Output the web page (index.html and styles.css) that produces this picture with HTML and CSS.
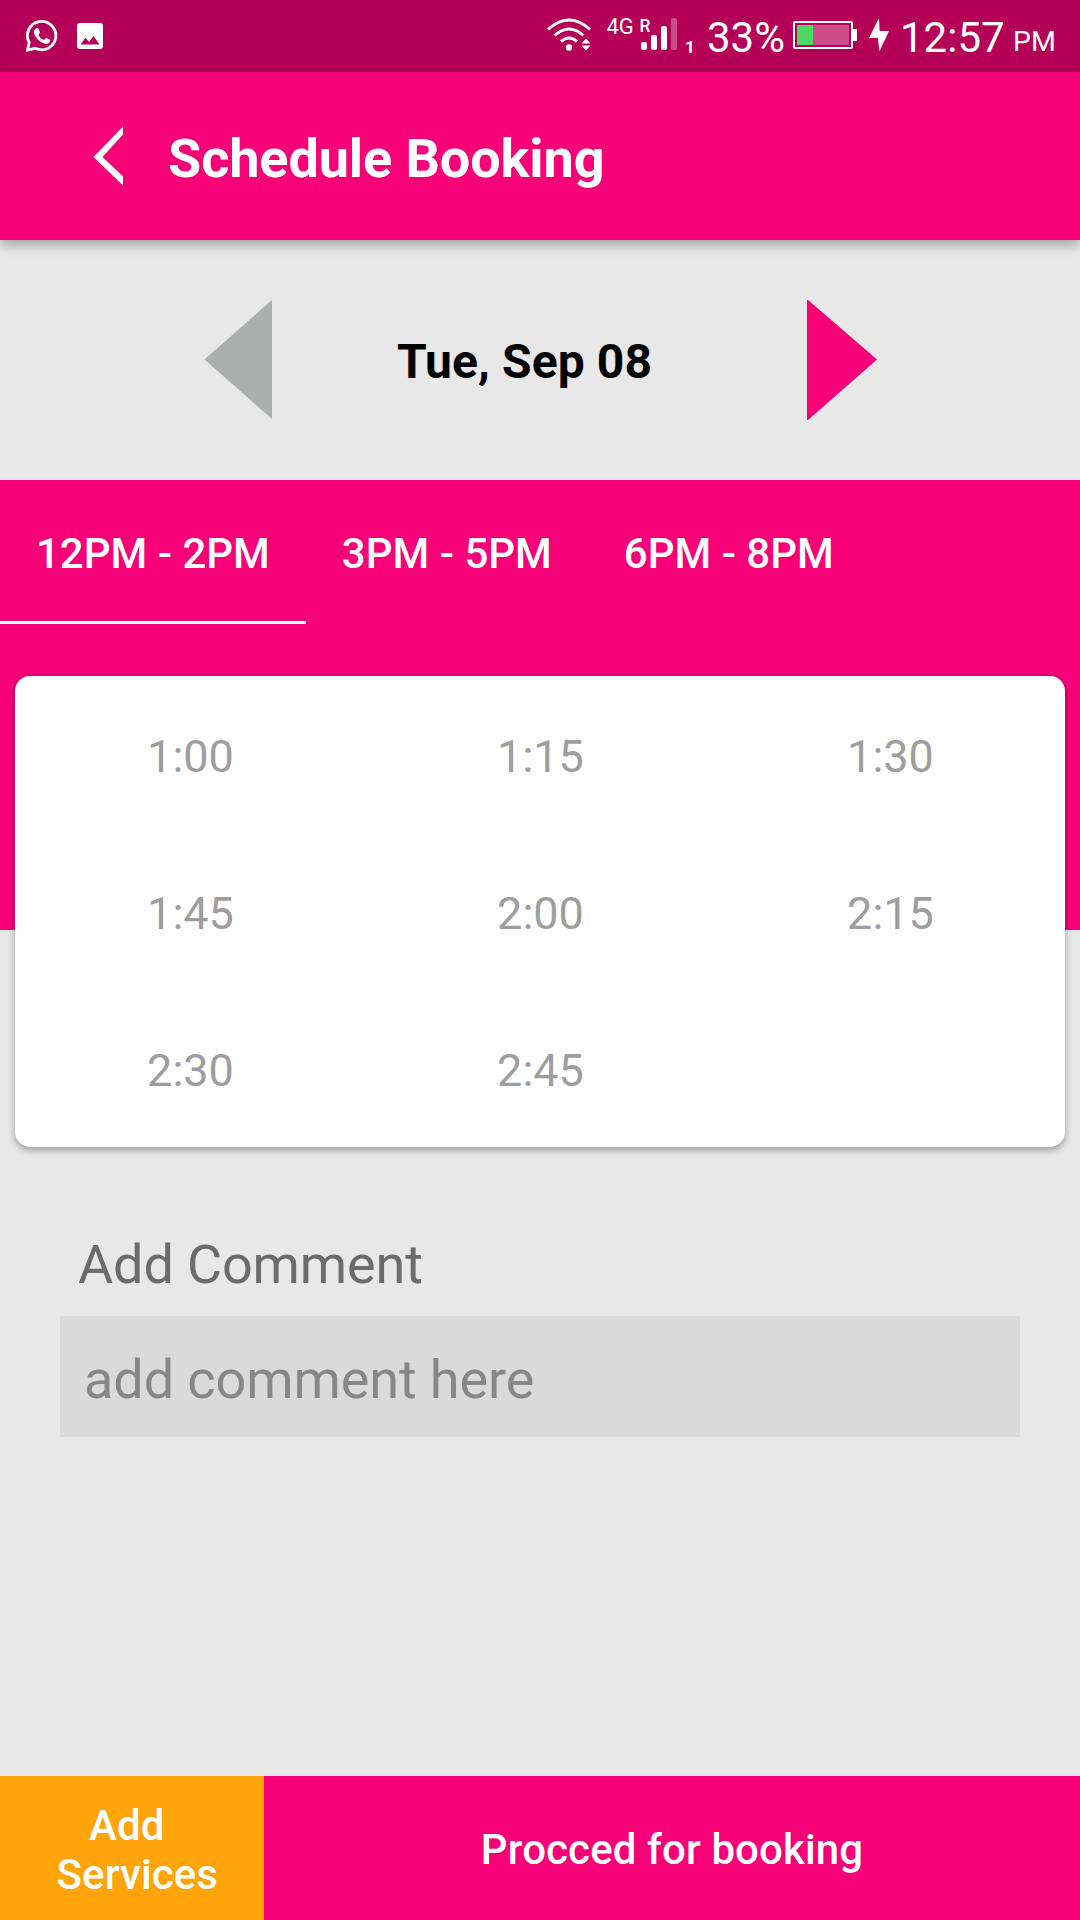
FILE: index.html
```
<!DOCTYPE html>
<html lang="en">
<head>
    <meta charset="UTF-8">
    <meta name="viewport" content="width=device-width, initial-scale=1.0">
    <title>Schedule Booking</title>
    <link rel="stylesheet" href="styles.css">
</head>
<body>
    <!-- Status bar -->
    <div class="status-bar">
        <svg class="icon-whatsapp" width="34" height="34" viewBox="0 0 34 34">
            <path d="M4.2 23.5 A14.2 14.2 0 1 1 10.2 29.3 L2.6 31.2 Z" fill="none" stroke="#fff" stroke-width="2.8"/>
            <path d="M11.2 9.2 C12.5 8.6 13.3 9 13.8 10.2 L14.9 13 C15.2 14 14.2 14.8 13.4 15.8 C14.6 18.2 16.5 20 19 21 C20 20.2 20.6 18.8 21.6 19.1 L24.6 20.6 C25.6 21.1 25.3 22.4 24.6 23.3 C23.3 24.8 21.3 25.2 19.5 24.6 C14.5 23 11 19.5 9.2 15 C8.4 12.8 9.2 10.2 11.2 9.2 Z" fill="#fff"/>
        </svg>
        <svg class="icon-picture" width="26" height="26" viewBox="0 0 26 26">
            <rect width="26" height="26" rx="3" fill="#fff"/>
            <path d="M3.5 21.5 L8.5 14.8 L12 19 L16.5 13 L22.5 21.5 Z" fill="#b50058"/>
        </svg>
        <div class="status-right">
            <svg class="icon-wifi" width="44" height="34" viewBox="0 0 44 34">
                <g fill="none" stroke="#fff" stroke-width="3">
                    <path d="M1 11.5 Q22 -7.5 43 11.5"/>
                    <path d="M7.5 17.5 Q22 4.5 36.5 17.5"/>
                    <path d="M14 23.5 Q22 16.5 30 23.5"/>
                </g>
                <circle cx="22" cy="29.5" r="3.2" fill="#fff"/>
                <path d="M34.5 25.5 L39 20.5 L43.5 25.5 Z M34.5 27.5 L39 32.5 L43.5 27.5 Z" fill="#fff"/>
            </svg>
            <svg class="icon-signal" width="100" height="50" viewBox="-5 -5 100 50">
                <text x="0.5" y="17" font-size="22">4G</text>
                <text x="33.5" y="14.5" font-size="17.5" font-weight="500">R</text>
                <rect x="35" y="25" width="6" height="8" rx="2" fill="#fff"/>
                <rect x="45" y="18" width="6" height="15" rx="2" fill="#fff"/>
                <rect x="55" y="9" width="6" height="24" rx="2" fill="#fff"/>
                <rect x="65" y="1" width="6" height="32" rx="2" fill="#cd4d8b"/>
                <text x="79" y="36" font-size="17" font-weight="700">1</text>
            </svg>
            <span class="battery-text">33%</span>
            <svg class="icon-battery" width="65" height="28" viewBox="0 0 65 28">
                <rect x="1" y="1" width="58" height="26" rx="1" fill="none" stroke="#fff" stroke-width="2"/>
                <rect x="4" y="4" width="52" height="20" fill="#cd4d8b"/>
                <rect x="4" y="4" width="16" height="20" fill="#4cd964"/>
                <rect x="60" y="8" width="4" height="12" fill="#fff"/>
            </svg>
            <svg class="icon-bolt" width="20" height="34" viewBox="0 0 20 34">
                <path d="M10 0 L0 20 H8.8 L10.5 33.5 L20 13 H10.6 Z" fill="#fff"/>
            </svg>
            <span class="clock">12:57</span>
            <span class="meridiem">PM</span>
        </div>
    </div>

    <!-- App header -->
    <header class="header">
        <svg class="back" width="30" height="60" viewBox="0 0 30 60">
            <path d="M30 0.5 L0.5 31 L30 59.5 V50.5 L9.5 31 L30 8.5 Z" fill="#fff"/>
        </svg>
        <h1>Schedule Booking</h1>
    </header>

    <!-- Date picker -->
    <div class="date-row">
        <svg class="prev" width="68" height="120" viewBox="0 0 68 120">
            <path d="M68 0 L0.5 59.5 L68 119 Z" fill="#adafae"/>
        </svg>
        <div class="date">Tue, Sep 08</div>
        <svg class="next" width="70" height="120" viewBox="0 0 70 120">
            <path d="M0 0 H1 L70 59.5 L1 120 H0 Z" fill="#f60078"/>
        </svg>
    </div>

    <!-- Time ranges and slots -->
    <div class="slots-area">
        <div class="tabs">
            <div class="tab active">12PM - 2PM</div>
            <div class="tab">3PM - 5PM</div>
            <div class="tab">6PM - 8PM</div>
        </div>
        <div class="slots">
            <div class="slot">1:00</div>
            <div class="slot">1:15</div>
            <div class="slot">1:30</div>
            <div class="slot">1:45</div>
            <div class="slot">2:00</div>
            <div class="slot">2:15</div>
            <div class="slot">2:30</div>
            <div class="slot">2:45</div>
        </div>
    </div>

    <!-- Comment -->
    <div class="comment">
        <label for="comment">Add Comment</label>
        <input type="text" id="comment" name="comment" placeholder="add comment here">
    </div>

    <!-- Bottom buttons -->
    <div class="footer">
        <button class="add-services">Add&nbsp;<br>&nbsp;Services</button>
        <button class="proceed">Procced for booking</button>
    </div>
</body>
</html>
```
FILE: styles.css
```
* {
    box-sizing: border-box;
}
body {
    font-family: Roboto, sans-serif;
    background-color: #e8e8e8;
    margin: 0;
    height: 1920px;
    display: flex;
    flex-direction: column;
    overflow: hidden;
}
svg {
    display: block;
    flex: none;
}
.status-bar {
    display: flex;
    align-items: flex-start;
    height: 72px;
    flex: none;
    background-color: #b50058;
    color: white;
}
.icon-whatsapp {
    margin: 19px 0 0 25px;
}
.icon-picture {
    margin: 23px 0 0 18px;
}
.icon-signal text {
    fill: white;
}
.status-right {
    display: flex;
    align-items: flex-start;
    margin-left: auto;
    padding-right: 25px;
    line-height: 50px;
    white-space: nowrap;
}
.icon-wifi {
    margin-top: 18px;
}
.icon-signal {
    margin: 12px 0 0 10px;
}
.battery-text {
    width: 92px;
    margin-top: 13px;
    padding-left: 6px;
    font-size: 42px;
}
.icon-battery {
    margin-top: 21px;
}
.icon-bolt {
    margin: 18px 0 0 11px;
}
.clock {
    width: 124px;
    margin-top: 13px;
    padding-left: 11px;
    font-size: 42px;
}
.meridiem {
    width: 42px;
    margin-top: 17px;
    font-size: 28.5px;
}
.header {
    display: flex;
    align-items: center;
    height: 168px;
    flex: none;
    padding: 0 93px;
    background-color: #f60078;
    color: white;
    box-shadow: 0 4px 12px rgba(0,0,0,0.35);
    z-index: 1;
}
.header h1 {
    margin: 6px 0 0 45px;
    font-size: 54px;
    font-weight: bold;
    line-height: 64px;
    letter-spacing: -0.1px;
}
.date-row {
    display: flex;
    height: 240px;
    flex: none;
    padding: 60px 203px 0 204px;
}
.date {
    flex: 1;
    padding: 34px 30px 0 0;
    text-align: center;
    font-size: 48px;
    font-weight: bold;
    line-height: 56px;
    letter-spacing: 0.1px;
}
.slots-area {
    height: 450px;
    flex: none;
    background-color: #f60078;
}
.tabs {
    display: flex;
    height: 144px;
}
.tab {
    padding: 49px 36px 0;
    border-bottom: 3px solid transparent;
    color: white;
    font-size: 42px;
    font-weight: 500;
    line-height: 50px;
    white-space: nowrap;
}
.tab.active {
    border-bottom-color: white;
}
.slots {
    display: grid;
    grid-template-columns: repeat(3, 1fr);
    grid-auto-rows: 157px;
    margin: 52px 15px 0;
    background-color: white;
    border-radius: 15px;
    box-shadow: 0 3px 7px rgba(0,0,0,0.35);
}
.slot {
    padding: 2px 0 0 1px;
    color: #9e9e9e;
    text-align: center;
    font-size: 45px;
    line-height: 157px;
}
.comment {
    display: flex;
    flex-direction: column;
    padding: 303px 60px 0;
}
.comment label {
    margin-left: 18px;
    color: #6b6b6b;
    font-size: 54px;
    line-height: 64px;
    letter-spacing: -0.15px;
}
.comment input {
    height: 121px;
    margin-top: 19px;
    padding: 5px 24px 0;
    border: none;
    background-color: #dadada;
    font-family: inherit;
    font-size: 54px;
    letter-spacing: -0.1px;
}
.comment input::placeholder {
    color: #878787;
    opacity: 1;
}
.footer {
    display: flex;
    height: 144px;
    flex: none;
    margin-top: auto;
}
.footer button {
    border: none;
    padding: 4px 0 0;
    color: white;
    font-family: inherit;
    font-size: 42px;
    font-weight: 500;
    line-height: 49px;
    letter-spacing: 0.1px;
}
.footer .add-services {
    width: 264px;
    background-color: #ffa40b;
}
.footer .proceed {
    flex: 1;
    padding-top: 2px;
    background-color: #f60078;
}
```
